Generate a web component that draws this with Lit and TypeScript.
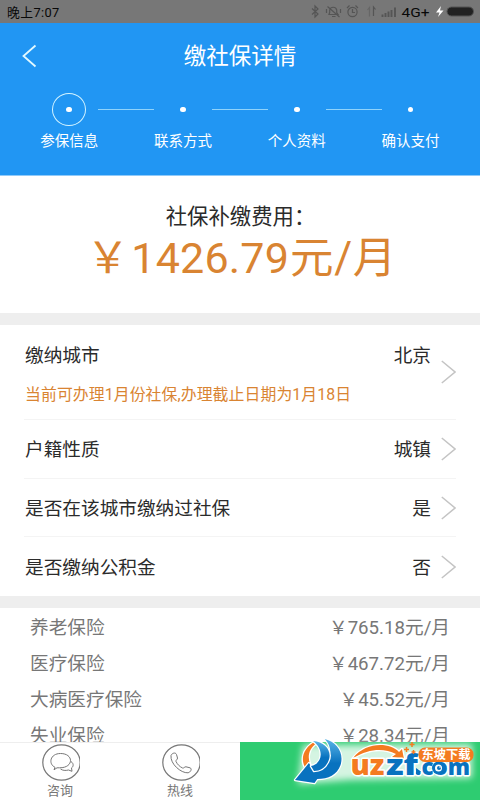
import { LitElement, html, svg, css } from "lit";
import { customElement } from "lit/decorators.js";
import { classMap } from "lit/directives/class-map.js";

const steps = ["参保信息", "联系方式", "个人资料", "确认支付"];
const rows = [
  { label: "缴纳城市", value: "北京", hint: "当前可办理1月份社保,办理截止日期为1月18日" },
  { label: "户籍性质", value: "城镇" },
  { label: "是否在该城市缴纳过社保", value: "是" },
  { label: "是否缴纳公积金", value: "否" },
];
const fees = [
  ["养老保险", "765.18"],
  ["医疗保险", "467.72"],
  ["大病医疗保险", "45.52"],
  ["失业保险", "28.34"],
];

@customElement("app-root")
export class AppRoot extends LitElement {
  static styles = css`
    :host {
      display: flex;
      flex-direction: column;
      position: relative;
      width: 480px;
      height: 800px;
      overflow: hidden;
      background: #fff;
      color: #2b2b2b;
      font-family: Roboto, "Noto Sans CJK SC", sans-serif;
    }
    * { box-sizing: border-box; }
    svg { display: block; flex: none; }
    .status {
      flex: none;
      height: 23px;
      background: #777;
      color: #080808;
      display: flex;
      justify-content: space-between;
      padding-left: 7px;
      font-size: 12.8px;
      line-height: 25px;
      letter-spacing: 0.4px;
    }
    .header {
      flex: none;
      height: 153px;
      background: #2196f3;
      border-bottom: 1px solid #90caf9;
      color: #fff;
    }
    .titlebar {
      height: 66px;
      display: grid;
      grid-template-columns: 60px 1fr 60px;
      align-items: center;
    }
    .title { text-align: center; font-size: 22.5px; line-height: 65px; padding-top: 1px; }
    .steps { display: grid; grid-template-columns: repeat(4, 113.8px); padding-left: 12.3px; }
    .step { display: flex; flex-direction: column; align-items: center; position: relative; font-size: 14.5px; line-height: 20px; }
    .mark { width: 34px; height: 33px; margin: 4px 0 6px; border-radius: 50%; display: flex; align-items: center; justify-content: center; }
    .mark.active { border: 1px solid #d4f4ff; }
    .mark::before { content: ""; width: 5.5px; height: 5.5px; border-radius: 50%; background: #fff; }
    .line { position: absolute; left: 86px; top: 20px; width: 56px; height: 1px; background: #8fd3fb; }
    .summary { flex: none; height: 137px; text-align: center; padding-top: 23px; }
    .caption { font-size: 21.4px; line-height: 36px; padding-left: 1px; }
    .price { font-size: 43px; line-height: 47px; color: #d98432; white-space: nowrap; letter-spacing: 0.2px; padding-left: 3px; }
    .price .yen { margin-right: 2px; }
    .price .unit { font-size: 43.5px; letter-spacing: 0.6px; margin-left: 1px; }
    .gap { flex: none; height: 12px; background: #eee; }
    .row {
      flex: none;
      height: 58.7px;
      margin: 0 24px;
      padding-left: 1px;
      border-bottom: 1px solid #f4f4f4;
      display: flex;
      align-items: center;
      font-size: 18.67px;
      line-height: 28px;
    }
    .row.tall { height: 95px; }
    .row:last-of-type { border: 0; }
    .body { flex: 1; padding-top: 2px; }
    .tall .body { padding-top: 4px; }
    .top { display: flex; justify-content: space-between; }
    .hint { color: #d98432; font-size: 15.85px; letter-spacing: 0.1px; line-height: 24px; margin-top: 13px; white-space: nowrap; }
    .chev { margin-left: 10px; }
    .fees { flex: 1; overflow: hidden; padding: 2px 30px 0; color: #777; font-size: 18.67px; }
    .fee { display: flex; justify-content: space-between; height: 36.1px; line-height: 36px; }
    .footer { flex: none; height: 58px; display: grid; grid-template-columns: 120px 120px 240px; border-top: 1px solid #eee; background: #fff; }
    .tool { display: flex; flex-direction: column; align-items: center; color: #777; font-size: 13px; line-height: 17px; padding-top: 1px; }
    .pay { background: #2ecc71; margin-top: -1px; }
    .logo { position: absolute; left: 285px; top: 730px; }
    .num { font-family: Roboto, sans-serif; letter-spacing: 0; }
    .brand { font-family: "Open Sans", sans-serif; font-weight: 800; }
    .tag { font-family: "Noto Sans CJK SC", sans-serif; font-weight: 700; }
  `;

  private statusIcons() {
    return svg`<svg width="174" height="23" viewBox="306 0 174 23" fill="none" stroke="#555" stroke-width="1.2">
      <path d="M312 8.500l6 5.500-3 3V6l3 3-6 5.500"/>
      <path d="M329 14.500h9l-1.300-2V10a3.600 3.600 0 0 0-7 0v2.500zM332 16.500h3.500M327.500 6.500l12 10.500M326.500 9v4M340.500 9v4"/>
      <circle cx="352.500" cy="12" r="4.600"/><path d="M352.500 9v3.500h2.500M347 8l2.500-2.500M358 8l-2.500-2.500"/>
      <path d="M369.500 16.500V7.500l-2 2.500" stroke="#666"/><path d="M373.500 16V7l2 2.500"/>
      <path d="M382.500 17v-2.500M385.500 17v-4M388.500 17v-5.500M391.500 17V10M395 17V7.500" stroke-width="1.900"/>
      <text class="num" x="401.500" y="17" font-size="13" fill="#080808" stroke="none" textLength="28" lengthAdjust="spacingAndGlyphs">4G+</text>
      <path d="M441 6l-5 6.500h3.500L438 17l5.500-6.500H440z" fill="#fff" stroke="none"/>
      <rect x="447" y="7" width="26.500" height="9" rx="4.500" fill="#222" stroke="#555" stroke-width="1"/>
    </svg>`;
  }

  private chevron() {
    return html`<svg class="chev" width="15" height="24" viewBox="0 0 15 24" fill="none" stroke="#c4c4c4" stroke-width="1.5"><path d="M.8 1L14 12 .8 23"/></svg>`;
  }

  private logo() {
    return svg`<svg class="logo" width="195" height="70" viewBox="285 730 195 70">
      <defs>
        <filter id="glow" x="-20%" y="-40%" width="140%" height="180%"><feGaussianBlur stdDeviation="3.500"/></filter>
        <linearGradient id="blue" x1="0" y1="0" x2="0" y2="1"><stop offset="0" stop-color="#5ab4e6"/><stop offset=".55" stop-color="#0872bf"/></linearGradient>
      </defs>
      <path d="M303 745L472 744v34L350 780l-52 4z" fill="#fff" opacity=".8" filter="url(#glow)"/>
      <g stroke="#fff" stroke-width="2.500" stroke-linejoin="round" paint-order="stroke">
        <path d="M316 741c-14 7-17 21-8 30l3-5c-4-8-3-17 6-23z" fill="#f47b20"/>
        <path d="M325 739c13 3 21 14 17 26-4 10-13 14-25 14l-3 4-21-3 15-17 4 6c20-2 24-20 13-30z" transform="translate(22.500 0) scale(.93 1)" fill="url(#blue)"/>
        <path d="M313 741c13 1 20 11 15 21-3 6-8 9-14 9l-3-5c11-2 14-16 2-25z" fill="url(#blue)"/>
        <path d="M353 758c13-16 36-16 46-6l3-3 2 10-12-2 4-3c-12-6-26-6-43 4z" fill="#f47b20"/>
      </g>
      <g class="brand" stroke="#fff" stroke-width="3" stroke-linejoin="round" paint-order="stroke">
        <text x="350.500" y="775" font-size="29" fill="#f47b20" textLength="34" lengthAdjust="spacingAndGlyphs">uz</text>
        <text x="386" y="775" font-size="29" fill="#0872bf" textLength="32" lengthAdjust="spacingAndGlyphs">zf</text>
        <text x="415" y="775" font-size="23" fill="#0872bf" textLength="55" lengthAdjust="spacingAndGlyphs">.com</text>
      </g>
      <circle cx="438.500" cy="768" r="6.500" fill="#0872bf"/><circle cx="438.500" cy="768" r="3.500" fill="#fff"/><circle cx="439" cy="768" r="2" fill="#0872bf"/><circle cx="440" cy="767" r=".8" fill="#fff"/>
      <path d="M416 768l5 3.500-5 3z" fill="#0872bf"/>
      <rect x="418.500" y="747.500" width="55" height="14.500" rx="6.500" fill="#f47b20"/>
      <text class="tag" x="421.500" y="759.300" font-size="12" fill="#fff" textLength="49" lengthAdjust="spacingAndGlyphs">东坡下载</text>
      <path d="M412 742v5M409.500 744.500h5M406.500 747v5M404 749.500h5M413.500 750v4M411.500 752h4" stroke="#f47b20" stroke-width="1.500"/>
    </svg>`;
  }

  render() {
    return html`
      <div class="status"><span>晚上7:07</span>${this.statusIcons()}</div>
      <div class="header">
        <div class="titlebar">
          <svg width="60" height="66" viewBox="0 0 60 66" fill="none" stroke="#e2f9ff" stroke-width="1.8"><path d="M35.500 22.500L23.500 33l12 10.500"/></svg>
          <div class="title">缴社保详情</div>
        </div>
        <div class="steps">
          ${steps.map((s, i) => html`<div class="step">
            <div class=${classMap({ mark: true, active: i === 0 })}></div>${s}
            ${i < steps.length - 1 ? html`<div class="line"></div>` : ""}
          </div>`)}
        </div>
      </div>
      <div class="summary">
        <div class="caption">社保补缴费用：</div>
        <div class="price"><span class="yen">￥</span>1426.79<span class="unit">元/月</span></div>
      </div>
      <div class="gap"></div>
      ${rows.map((r) => html`<section class=${classMap({ row: true, tall: !!r.hint })}>
        <div class="body">
          <div class="top"><span>${r.label}</span><span>${r.value}</span></div>
          ${r.hint ? html`<div class="hint">${r.hint}</div>` : ""}
        </div>
        ${this.chevron()}
      </section>`)}
      <div class="gap"></div>
      <div class="fees">
        ${fees.map(([name, n]) => html`<div class="fee"><span>${name}</span><span>￥${n}元/月</span></div>`)}
      </div>
      <div class="footer">
        <div class="tool">
          <svg width="40" height="38" viewBox="0 0 40 38" fill="none" stroke="#777" stroke-width="1.2"><ellipse cx="21.500" cy="18.500" rx="18.700" ry="17.700"/><path d="M15 23.300C8 20 10 9.500 20.500 9.500c13.500 0 13.500 14.500-1 14.300l-2.500 0-3 2zM31 17.500c3.500 2.500 2 5.500.5 6.500l.5 3.300-3.500-1.300c-3 .8-6 .5-8-1" stroke-width="1"/></svg>
          咨询
        </div>
        <div class="tool">
          <svg width="40" height="38" viewBox="0 0 40 38" fill="none" stroke="#777" stroke-width="1.2"><ellipse cx="21.500" cy="18.500" rx="18.700" ry="17.700"/><path d="M11 11.500c1-2.500 4.500-3.500 5.500-1l1 3.500c.3 1.500-2 2-1.500 3.500 1.500 3 3.500 5 6.500 6.500 1.500.5 2-1.500 3.500-1.200l4 1c2.500 1 .5 4.500-2 5-7 .5-18-9-17-17.300z" stroke-width="1"/></svg>
          热线
        </div>
        <div class="pay"></div>
      </div>
      ${this.logo()}
    `;
  }
}
